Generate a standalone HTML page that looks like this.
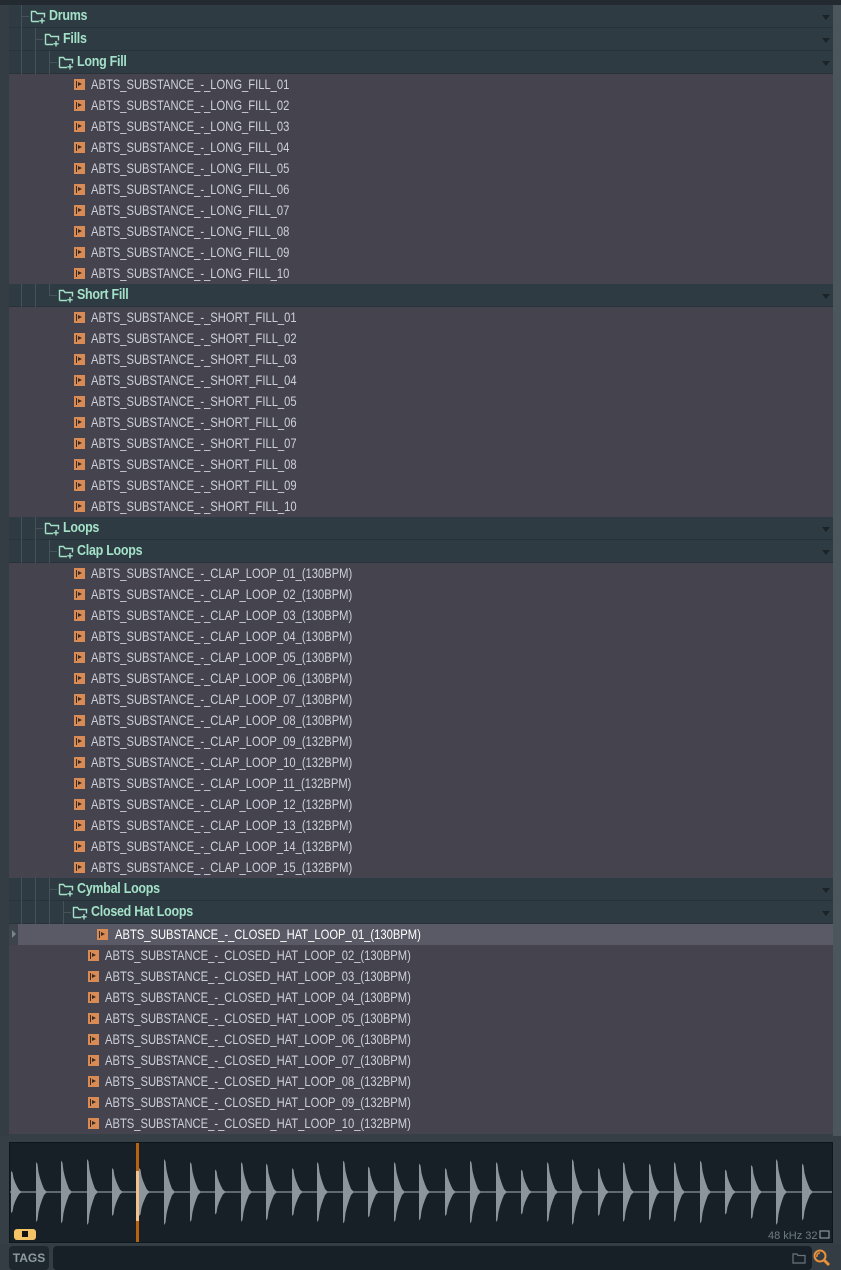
<!DOCTYPE html>
<html><head><meta charset="utf-8"><style>
*{margin:0;padding:0;box-sizing:border-box}
body{width:841px;height:1270px;background:#363f45;position:relative;overflow:hidden;font-family:"Liberation Sans",sans-serif}
#top{position:absolute;left:0;top:0;width:841px;height:5px;background:#232b30}
#lsb{position:absolute;left:0;top:5px;width:9px;height:1131px;background:#343d43}
#rsb{position:absolute;left:833px;top:5px;width:8px;height:1131px;background:#4a555c}
#list{position:absolute;left:9px;top:5px;width:824px}
.f{height:23px;background:#2f3b42;border-bottom:1px solid #283238;position:relative;color:#a3e2c8;font-size:14.5px}
.r{height:21px;background:#45434e;position:relative;color:#cdd0da;font-size:14px}
.sel{background:#5a5966;color:#fff}
.t{position:absolute;top:3px;white-space:nowrap;transform:scaleX(.8);transform-origin:left}
.f .t{transform:scaleX(.86);font-weight:bold;letter-spacing:-0.3px}
.r .t{top:2px}
.ic{position:absolute;top:5px;width:11px;height:11px;background:#d98b56}
.ic:before{content:"";position:absolute;left:2px;top:2px;width:1px;height:7px;background:#3a2a20}
.ic:after{content:"";position:absolute;left:4px;top:3px;border-left:4px solid #3a2a20;border-top:2.5px solid transparent;border-bottom:2.5px solid transparent}
.fi{position:absolute;top:4px;width:16px;height:15px}
.ar{position:absolute;right:3px;top:10px;border-top:5px solid #1b2327;border-left:4px solid transparent;border-right:4px solid transparent}
.vl{position:absolute;top:0;bottom:-1px;width:1px;background:#45525a}
.hl{position:absolute;top:11px;height:1px;background:#45525a;width:8px}
#wave{position:absolute;left:9px;top:1142px;width:824px;height:101px;background:#172026;border:1px solid #0f161a}
#bot{position:absolute;left:0;top:1244px;width:841px;height:26px;background:#343d43}
#tags{position:absolute;left:9px;top:2px;width:40px;height:24px;background:#1e272d;border-radius:4px;color:#8f9aa2;font-size:12px;font-weight:bold;text-align:center;line-height:24px}
#inp{position:absolute;left:53px;top:2px;width:759px;height:24px;background:#172026;border-radius:4px}
</style></head><body>
<svg width="0" height="0" style="position:absolute"><defs><g id="fold"><path d="M1.5,12.5 V2.5 H5.5 L7,4.5 H14.5 V8.5 M1.5,12.5 H9" fill="none" stroke="#a3e2c8" stroke-width="1.4"/><path d="M12,9 V14.5 M9.3,11.8 H14.7" stroke="#a3e2c8" stroke-width="1.4"/></g></defs></svg>
<div id="top"></div><div id="lsb"></div><div id="rsb"></div>
<div id="list">
<div class="f"><div class="vl" style="left:12px"></div><div class="hl" style="left:12px"></div><svg class="fi" style="left:21px"><use href="#fold"/></svg><span class="t" style="left:40px">Drums</span><div class="ar"></div></div>
<div class="f"><div class="vl" style="left:12px"></div><div class="vl" style="left:26px"></div><div class="hl" style="left:26px"></div><svg class="fi" style="left:35px"><use href="#fold"/></svg><span class="t" style="left:54px">Fills</span><div class="ar"></div></div>
<div class="f"><div class="vl" style="left:12px"></div><div class="vl" style="left:26px"></div><div class="vl" style="left:40px"></div><div class="hl" style="left:40px"></div><svg class="fi" style="left:49px"><use href="#fold"/></svg><span class="t" style="left:68px">Long Fill</span><div class="ar"></div></div>
<div class="r"><div class="ic" style="left:65px"></div><span class="t" style="left:82px">ABTS_SUBSTANCE_-_LONG_FILL_01</span></div>
<div class="r"><div class="ic" style="left:65px"></div><span class="t" style="left:82px">ABTS_SUBSTANCE_-_LONG_FILL_02</span></div>
<div class="r"><div class="ic" style="left:65px"></div><span class="t" style="left:82px">ABTS_SUBSTANCE_-_LONG_FILL_03</span></div>
<div class="r"><div class="ic" style="left:65px"></div><span class="t" style="left:82px">ABTS_SUBSTANCE_-_LONG_FILL_04</span></div>
<div class="r"><div class="ic" style="left:65px"></div><span class="t" style="left:82px">ABTS_SUBSTANCE_-_LONG_FILL_05</span></div>
<div class="r"><div class="ic" style="left:65px"></div><span class="t" style="left:82px">ABTS_SUBSTANCE_-_LONG_FILL_06</span></div>
<div class="r"><div class="ic" style="left:65px"></div><span class="t" style="left:82px">ABTS_SUBSTANCE_-_LONG_FILL_07</span></div>
<div class="r"><div class="ic" style="left:65px"></div><span class="t" style="left:82px">ABTS_SUBSTANCE_-_LONG_FILL_08</span></div>
<div class="r"><div class="ic" style="left:65px"></div><span class="t" style="left:82px">ABTS_SUBSTANCE_-_LONG_FILL_09</span></div>
<div class="r"><div class="ic" style="left:65px"></div><span class="t" style="left:82px">ABTS_SUBSTANCE_-_LONG_FILL_10</span></div>
<div class="f"><div class="vl" style="left:12px"></div><div class="vl" style="left:26px"></div><div class="vl" style="left:40px;bottom:11px"></div><div class="hl" style="left:40px"></div><svg class="fi" style="left:49px"><use href="#fold"/></svg><span class="t" style="left:68px">Short Fill</span><div class="ar"></div></div>
<div class="r"><div class="ic" style="left:65px"></div><span class="t" style="left:82px">ABTS_SUBSTANCE_-_SHORT_FILL_01</span></div>
<div class="r"><div class="ic" style="left:65px"></div><span class="t" style="left:82px">ABTS_SUBSTANCE_-_SHORT_FILL_02</span></div>
<div class="r"><div class="ic" style="left:65px"></div><span class="t" style="left:82px">ABTS_SUBSTANCE_-_SHORT_FILL_03</span></div>
<div class="r"><div class="ic" style="left:65px"></div><span class="t" style="left:82px">ABTS_SUBSTANCE_-_SHORT_FILL_04</span></div>
<div class="r"><div class="ic" style="left:65px"></div><span class="t" style="left:82px">ABTS_SUBSTANCE_-_SHORT_FILL_05</span></div>
<div class="r"><div class="ic" style="left:65px"></div><span class="t" style="left:82px">ABTS_SUBSTANCE_-_SHORT_FILL_06</span></div>
<div class="r"><div class="ic" style="left:65px"></div><span class="t" style="left:82px">ABTS_SUBSTANCE_-_SHORT_FILL_07</span></div>
<div class="r"><div class="ic" style="left:65px"></div><span class="t" style="left:82px">ABTS_SUBSTANCE_-_SHORT_FILL_08</span></div>
<div class="r"><div class="ic" style="left:65px"></div><span class="t" style="left:82px">ABTS_SUBSTANCE_-_SHORT_FILL_09</span></div>
<div class="r"><div class="ic" style="left:65px"></div><span class="t" style="left:82px">ABTS_SUBSTANCE_-_SHORT_FILL_10</span></div>
<div class="f"><div class="vl" style="left:12px"></div><div class="vl" style="left:26px"></div><div class="hl" style="left:26px"></div><svg class="fi" style="left:35px"><use href="#fold"/></svg><span class="t" style="left:54px">Loops</span><div class="ar"></div></div>
<div class="f"><div class="vl" style="left:12px"></div><div class="vl" style="left:26px"></div><div class="vl" style="left:40px"></div><div class="hl" style="left:40px"></div><svg class="fi" style="left:49px"><use href="#fold"/></svg><span class="t" style="left:68px">Clap Loops</span><div class="ar"></div></div>
<div class="r"><div class="ic" style="left:65px"></div><span class="t" style="left:82px">ABTS_SUBSTANCE_-_CLAP_LOOP_01_(130BPM)</span></div>
<div class="r"><div class="ic" style="left:65px"></div><span class="t" style="left:82px">ABTS_SUBSTANCE_-_CLAP_LOOP_02_(130BPM)</span></div>
<div class="r"><div class="ic" style="left:65px"></div><span class="t" style="left:82px">ABTS_SUBSTANCE_-_CLAP_LOOP_03_(130BPM)</span></div>
<div class="r"><div class="ic" style="left:65px"></div><span class="t" style="left:82px">ABTS_SUBSTANCE_-_CLAP_LOOP_04_(130BPM)</span></div>
<div class="r"><div class="ic" style="left:65px"></div><span class="t" style="left:82px">ABTS_SUBSTANCE_-_CLAP_LOOP_05_(130BPM)</span></div>
<div class="r"><div class="ic" style="left:65px"></div><span class="t" style="left:82px">ABTS_SUBSTANCE_-_CLAP_LOOP_06_(130BPM)</span></div>
<div class="r"><div class="ic" style="left:65px"></div><span class="t" style="left:82px">ABTS_SUBSTANCE_-_CLAP_LOOP_07_(130BPM)</span></div>
<div class="r"><div class="ic" style="left:65px"></div><span class="t" style="left:82px">ABTS_SUBSTANCE_-_CLAP_LOOP_08_(130BPM)</span></div>
<div class="r"><div class="ic" style="left:65px"></div><span class="t" style="left:82px">ABTS_SUBSTANCE_-_CLAP_LOOP_09_(132BPM)</span></div>
<div class="r"><div class="ic" style="left:65px"></div><span class="t" style="left:82px">ABTS_SUBSTANCE_-_CLAP_LOOP_10_(132BPM)</span></div>
<div class="r"><div class="ic" style="left:65px"></div><span class="t" style="left:82px">ABTS_SUBSTANCE_-_CLAP_LOOP_11_(132BPM)</span></div>
<div class="r"><div class="ic" style="left:65px"></div><span class="t" style="left:82px">ABTS_SUBSTANCE_-_CLAP_LOOP_12_(132BPM)</span></div>
<div class="r"><div class="ic" style="left:65px"></div><span class="t" style="left:82px">ABTS_SUBSTANCE_-_CLAP_LOOP_13_(132BPM)</span></div>
<div class="r"><div class="ic" style="left:65px"></div><span class="t" style="left:82px">ABTS_SUBSTANCE_-_CLAP_LOOP_14_(132BPM)</span></div>
<div class="r"><div class="ic" style="left:65px"></div><span class="t" style="left:82px">ABTS_SUBSTANCE_-_CLAP_LOOP_15_(132BPM)</span></div>
<div class="f"><div class="vl" style="left:12px"></div><div class="vl" style="left:26px"></div><div class="vl" style="left:40px"></div><div class="hl" style="left:40px"></div><svg class="fi" style="left:49px"><use href="#fold"/></svg><span class="t" style="left:68px">Cymbal Loops</span><div class="ar"></div></div>
<div class="f"><div class="vl" style="left:12px"></div><div class="vl" style="left:26px"></div><div class="vl" style="left:40px"></div><div class="vl" style="left:54px"></div><div class="hl" style="left:54px"></div><svg class="fi" style="left:63px"><use href="#fold"/></svg><span class="t" style="left:82px">Closed Hat Loops</span><div class="ar"></div></div>
<div class="r sel"><div style="position:absolute;left:0;top:0;width:9px;height:21px;background:#3d444b"></div><div style="position:absolute;left:3px;top:6px;border-left:4px solid #7d858c;border-top:4px solid transparent;border-bottom:4px solid transparent"></div><div class="ic" style="left:88px"></div><span class="t" style="left:106px">ABTS_SUBSTANCE_-_CLOSED_HAT_LOOP_01_(130BPM)</span></div>
<div class="r"><div class="ic" style="left:79px"></div><span class="t" style="left:96px">ABTS_SUBSTANCE_-_CLOSED_HAT_LOOP_02_(130BPM)</span></div>
<div class="r"><div class="ic" style="left:79px"></div><span class="t" style="left:96px">ABTS_SUBSTANCE_-_CLOSED_HAT_LOOP_03_(130BPM)</span></div>
<div class="r"><div class="ic" style="left:79px"></div><span class="t" style="left:96px">ABTS_SUBSTANCE_-_CLOSED_HAT_LOOP_04_(130BPM)</span></div>
<div class="r"><div class="ic" style="left:79px"></div><span class="t" style="left:96px">ABTS_SUBSTANCE_-_CLOSED_HAT_LOOP_05_(130BPM)</span></div>
<div class="r"><div class="ic" style="left:79px"></div><span class="t" style="left:96px">ABTS_SUBSTANCE_-_CLOSED_HAT_LOOP_06_(130BPM)</span></div>
<div class="r"><div class="ic" style="left:79px"></div><span class="t" style="left:96px">ABTS_SUBSTANCE_-_CLOSED_HAT_LOOP_07_(130BPM)</span></div>
<div class="r"><div class="ic" style="left:79px"></div><span class="t" style="left:96px">ABTS_SUBSTANCE_-_CLOSED_HAT_LOOP_08_(132BPM)</span></div>
<div class="r"><div class="ic" style="left:79px"></div><span class="t" style="left:96px">ABTS_SUBSTANCE_-_CLOSED_HAT_LOOP_09_(132BPM)</span></div>
<div class="r"><div class="ic" style="left:79px"></div><span class="t" style="left:96px">ABTS_SUBSTANCE_-_CLOSED_HAT_LOOP_10_(132BPM)</span></div>
</div>
<div id="wave">
<svg width="822" height="99" viewBox="0 0 822 99" style="position:absolute;left:0;top:0">
<defs><path id="sp" d="M0,0 L0,-30 L1.5,-28 L2.5,-20 L4,-14 L6,-8 L8,-3 L11,0 L8,3 L6,8 L4,14 L2.5,20 L1.5,28 L0,30 Z" fill="#8c949c"/></defs>
<line x1="0" y1="49" x2="822" y2="49" stroke="#8c949c" stroke-width="1.2"/>
<g transform="translate(0,49)">
<use href="#sp" transform="translate(1,0) scale(1,.7)"/>
<use href="#sp" transform="translate(26,0) scale(1,1)"/>
<use href="#sp" transform="translate(51,0) scale(1,1.05)"/>
<use href="#sp" transform="translate(77,0) scale(1,1.1)"/>
<use href="#sp" transform="translate(102,0) scale(1,.8)"/>
<use href="#sp" transform="translate(129,0) scale(1,.8)"/>
<use href="#sp" transform="translate(154,0) scale(1,1.1)"/>
<use href="#sp" transform="translate(180,0) scale(1,1)"/>
<use href="#sp" transform="translate(205,0) scale(1,.75)"/>
<use href="#sp" transform="translate(231,0) scale(1,1)"/>
<use href="#sp" transform="translate(256,0) scale(1,.95)"/>
<use href="#sp" transform="translate(282,0) scale(1,.8)"/>
<use href="#sp" transform="translate(307,0) scale(1,1)"/>
<use href="#sp" transform="translate(333,0) scale(1,1.05)"/>
<use href="#sp" transform="translate(358,0) scale(1,.85)"/>
<use href="#sp" transform="translate(384,0) scale(1,1)"/>
<use href="#sp" transform="translate(409,0) scale(1,.95)"/>
<use href="#sp" transform="translate(435,0) scale(1,.8)"/>
<use href="#sp" transform="translate(460,0) scale(1,1.05)"/>
<use href="#sp" transform="translate(486,0) scale(1,1)"/>
<use href="#sp" transform="translate(511,0) scale(1,.75)"/>
<use href="#sp" transform="translate(537,0) scale(1,1)"/>
<use href="#sp" transform="translate(562,0) scale(1,1.1)"/>
<use href="#sp" transform="translate(588,0) scale(1,.8)"/>
<use href="#sp" transform="translate(613,0) scale(1,1)"/>
<use href="#sp" transform="translate(639,0) scale(1,.95)"/>
<use href="#sp" transform="translate(664,0) scale(1,1)"/>
<use href="#sp" transform="translate(690,0) scale(1,1.05)"/>
<use href="#sp" transform="translate(715,0) scale(1,.75)"/>
<use href="#sp" transform="translate(741,0) scale(1,.9)"/>
<use href="#sp" transform="translate(766,0) scale(1,1.1)"/>
<use href="#sp" transform="translate(792,0) scale(1,.95)"/>
</g>
<rect x="126" y="0" width="3" height="99" fill="#b8620f"/>
<rect x="126" y="28" width="3" height="50" fill="#f2c18e"/>
<rect x="4" y="86" width="22" height="11" rx="3" fill="#f3c365"/>
<rect x="12" y="88" width="6" height="6" fill="#111"/>
<text x="758" y="96" font-family="Liberation Sans,sans-serif" font-size="11" fill="#6f7a82">48 kHz 32</text>
<rect x="810" y="88" width="9" height="7" fill="none" stroke="#8a949c" stroke-width="1.2"/>
</svg>
</div>
<div id="bot"><div id="tags">TAGS</div><div id="inp">
<svg width="14" height="12" style="position:absolute;left:739px;top:6px"><path d="M1,2 H5 L6,3.5 H13 V11 H1 Z" fill="none" stroke="#6a747c" stroke-width="1.2"/></svg></div>
<svg width="20" height="20" style="position:absolute;left:812px;top:4px"><circle cx="8" cy="8" r="5.5" fill="none" stroke="#e8913a" stroke-width="2"/><path d="M12,12 L17,17" stroke="#e8913a" stroke-width="3"/><path d="M5,9 A3,3 0 0 1 8,5" stroke="#e8913a" fill="none" stroke-width="1.5"/></svg>
</div>
</body></html>
